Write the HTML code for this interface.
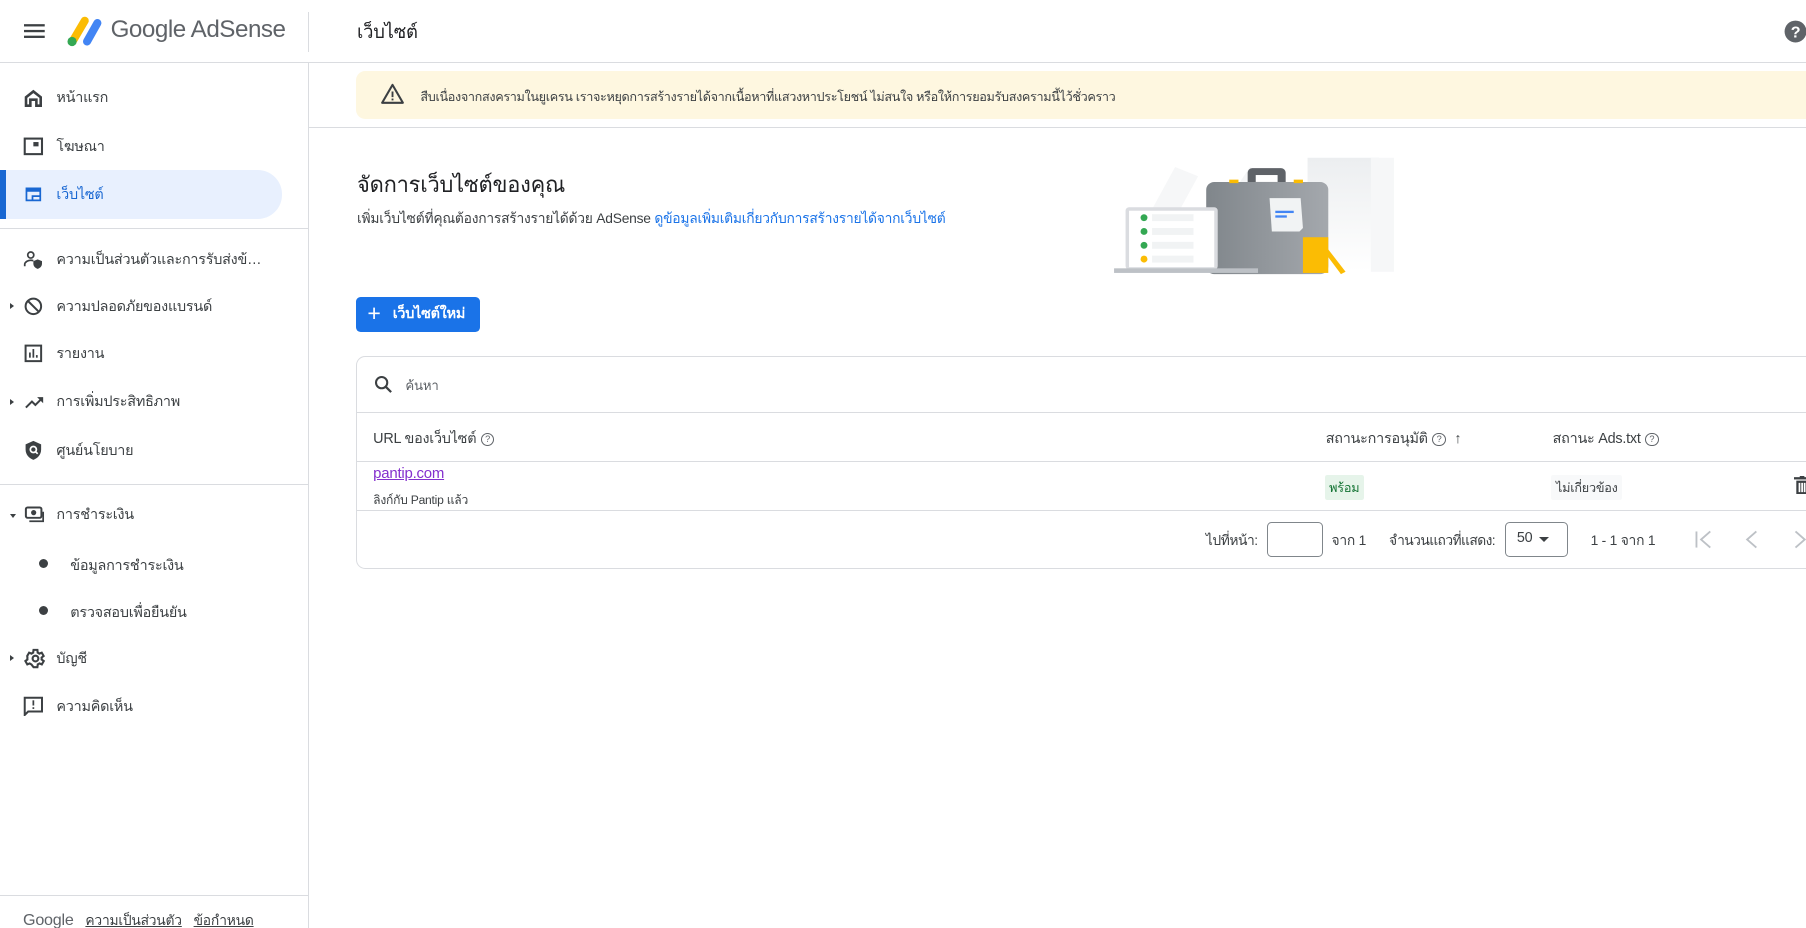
<!DOCTYPE html>
<html><head><meta charset="utf-8">
<style>
html,body{margin:0;padding:0;width:1806px;height:928px;overflow:hidden;background:#fff}
#r{zoom:1.15178;width:1568px;height:806px;position:relative;overflow:hidden;font-family:"Liberation Sans","Noto Sans CJK SC",sans-serif;color:#3c4043;letter-spacing:-0.2px}
.a{position:absolute}
.ni{position:absolute;left:0;width:245px;height:42px;display:flex;align-items:center;font-size:12.5px;color:#3c4043}
.ni svg{position:absolute;left:20px}
.ni span{position:absolute;left:49px;white-space:nowrap}
.car{position:absolute;left:9px;width:0;height:0;border-top:3px solid transparent;border-bottom:3px solid transparent;border-left:4px solid #3c4043}
.hl{position:absolute;height:1px;background:#dadce0}
.q{display:inline-block;width:10px;height:10px;border:1px solid #5f6368;border-radius:50%;font-size:8px;line-height:10px;text-align:center;color:#5f6368;vertical-align:middle;margin-left:4px;letter-spacing:0}
</style></head><body><div id="r">
<!-- header -->
<svg class="a" style="left:21px;top:20px" width="18" height="14"><rect y="1" width="18" height="2" fill="#3c4043"/><rect y="6" width="18" height="2" fill="#3c4043"/><rect y="11" width="18" height="2" fill="#3c4043"/></svg>
<svg class="a" style="left:56px;top:13px" width="34" height="28" viewBox="0 0 34 28"><line x1="8" y1="22" x2="18" y2="5" stroke="#fbbc04" stroke-width="7" stroke-linecap="round"/><line x1="20" y1="23" x2="29" y2="7" stroke="#4285f4" stroke-width="7" stroke-linecap="round"/><circle cx="7" cy="23" r="4" fill="#34a853"/></svg>
<div class="a" style="left:96px;top:14px;font-size:21px;color:#5f6368;letter-spacing:-0.4px">Google AdSense</div>
<div class="a" style="left:267px;top:10px;width:1px;height:35px;background:#dadce0"></div>
<div class="a" style="left:310px;top:16px;font-size:16px;color:#202124">เว็บไซต์</div>
<svg class="a" style="left:1549px;top:17px" width="20" height="20"><circle cx="10" cy="10" r="9.5" fill="#5f6368"/><text x="10" y="15" font-size="14" font-weight="bold" fill="#fff" text-anchor="middle" font-family="Liberation Sans">?</text></svg>
<div class="hl" style="left:0;top:54px;width:1568px"></div>
<div class="a" style="left:267px;top:54px;width:1px;height:752px;background:#dadce0"></div>

<!-- sidebar -->
<div class="ni" style="top:64px"><svg width="18" height="18" viewBox="0 0 24 24"><path d="M12 2L2 10v12h8v-7h4v7h8V10z M5 11.5l7-5.5 7 5.5V19h-2v-7H7v7H5z" fill="#3c4043" fill-rule="evenodd"/></svg><span>หน้าแรก</span></div>
<div class="ni" style="top:106px"><svg width="18" height="18" viewBox="0 0 24 24"><rect x="2" y="3" width="20" height="18" fill="none" stroke="#3c4043" stroke-width="2.4"/><rect x="12" y="7" width="6" height="5" fill="#3c4043"/></svg><span>โฆษณา</span></div>
<div class="a" style="left:0;top:148px;width:245px;height:42px;background:#e8f0fe;border-radius:0 21px 21px 0"></div>
<div class="a" style="left:0;top:148px;width:5px;height:42px;background:#1967d2"></div>
<div class="ni" style="top:148px;color:#1967d2"><svg width="18" height="18" viewBox="0 0 24 24"><path d="M3 4h18v16H3z M5 9v9h5v-5h9V9z M12 15v3h7v-3z" fill="#1967d2" fill-rule="evenodd"/></svg><span>เว็บไซต์</span></div>
<div class="hl" style="left:0;top:198px;width:267px"></div>
<div class="ni" style="top:204px"><svg width="18" height="18" viewBox="0 0 24 24"><circle cx="9" cy="7" r="3.5" fill="none" stroke="#3c4043" stroke-width="2"/><path d="M2 20v-2c0-3 4-5 7-5 1 0 2 .2 3 .5" fill="none" stroke="#3c4043" stroke-width="2"/><path d="M17 12l5 2v3c0 3-2 5-5 6-3-1-5-3-5-6v-3z" fill="#3c4043"/></svg><span style="width:182px;overflow:hidden;text-overflow:ellipsis">ความเป็นส่วนตัวและการรับส่งข้อความ</span></div>
<div class="car" style="top:263px"></div>
<div class="ni" style="top:245px"><svg width="18" height="18" viewBox="0 0 24 24"><circle cx="12" cy="12" r="9" fill="none" stroke="#3c4043" stroke-width="2.3"/><line x1="5.5" y1="5.5" x2="18.5" y2="18.5" stroke="#3c4043" stroke-width="2.3"/></svg><span>ความปลอดภัยของแบรนด์</span></div>
<div class="ni" style="top:286px"><svg width="18" height="18" viewBox="0 0 24 24"><rect x="3" y="3" width="18" height="18" fill="none" stroke="#3c4043" stroke-width="2.3"/><rect x="7" y="11" width="2" height="6" fill="#3c4043"/><rect x="11" y="7" width="2" height="10" fill="#3c4043"/><rect x="15" y="14" width="2" height="3" fill="#3c4043"/></svg><span>รายงาน</span></div>
<div class="car" style="top:346px"></div>
<div class="ni" style="top:328px"><svg width="20" height="18" viewBox="0 0 24 24"><path d="M2 18l7-7 4 4 8-8" fill="none" stroke="#3c4043" stroke-width="2.3"/><path d="M15 6h7v7z" fill="#3c4043"/></svg><span>การเพิ่มประสิทธิภาพ</span></div>
<div class="ni" style="top:370px"><svg width="18" height="18" viewBox="0 0 24 24"><path d="M12 1l9 4v6c0 6-4 10-9 12-5-2-9-6-9-12V5z" fill="#3c4043"/><circle cx="12" cy="11" r="3.5" fill="none" stroke="#fff" stroke-width="2"/><line x1="14.5" y1="13.5" x2="17" y2="16" stroke="#fff" stroke-width="2"/></svg><span>ศูนย์นโยบาย</span></div>
<div class="hl" style="left:0;top:420px;width:267px"></div>
<div class="a" style="left:9px;top:446px;width:0;height:0;border-left:3px solid transparent;border-right:3px solid transparent;border-top:4px solid #3c4043"></div>
<div class="ni" style="top:426px"><svg width="20" height="18" viewBox="0 0 24 24"><rect x="2" y="4" width="18" height="12" rx="2" fill="none" stroke="#3c4043" stroke-width="2.3"/><circle cx="11" cy="10" r="3" fill="#3c4043"/><path d="M6 20h16V9" fill="none" stroke="#3c4043" stroke-width="2"/></svg><span>การชำระเงิน</span></div>
<div class="a" style="left:34px;top:485px;width:8px;height:8px;border-radius:50%;background:#3c4043"></div>
<div class="a" style="left:61px;top:481px;font-size:12.5px">ข้อมูลการชำระเงิน</div>
<div class="a" style="left:34px;top:526px;width:8px;height:8px;border-radius:50%;background:#3c4043"></div>
<div class="a" style="left:61px;top:522px;font-size:12.5px">ตรวจสอบเพื่อยืนยัน</div>
<div class="car" style="top:569px"></div>
<div class="ni" style="top:551px"><svg width="20" height="20" viewBox="0 0 24 24"><path d="M19.4 13a7.5 7.5 0 000-2l2.1-1.6-2-3.5-2.5 1a7 7 0 00-1.7-1L15 3h-4l-.4 2.9a7 7 0 00-1.7 1l-2.5-1-2 3.5L4.6 11a7.5 7.5 0 000 2l-2.1 1.6 2 3.5 2.5-1a7 7 0 001.7 1L11 21h4l.4-2.9a7 7 0 001.7-1l2.5 1 2-3.5z" fill="none" stroke="#3c4043" stroke-width="2.2"/><circle cx="13" cy="12" r="3" fill="none" stroke="#3c4043" stroke-width="2.2"/></svg><span>บัญชี</span></div>
<div class="ni" style="top:592px"><svg width="18" height="18" viewBox="0 0 24 24"><path d="M2 2h20v16H6l-4 4z" fill="none" stroke="#3c4043" stroke-width="2.3"/><rect x="11" y="5" width="2" height="6" fill="#3c4043"/><rect x="11" y="13" width="2" height="2" fill="#3c4043"/></svg><span>ความคิดเห็น</span></div>
<div class="hl" style="left:0;top:777px;width:267px"></div>
<div class="a" style="left:20px;top:790px;font-size:13px;color:#5f6368;white-space:nowrap"><span style="font-size:14px">Google</span>&nbsp;&nbsp; <u style="color:#3c4043;font-size:12px">ความเป็นส่วนตัว</u>&nbsp;&nbsp; <u style="color:#3c4043;font-size:12px">ข้อกำหนด</u></div>

<!-- banner -->
<div class="a" style="left:309px;top:62px;width:1280px;height:41px;background:#fef7e0;border-radius:8px"></div>
<svg class="a" style="left:331px;top:72px" width="20" height="18" viewBox="0 0 24 22"><path d="M12 2L1 21h22z" fill="none" stroke="#3c4043" stroke-width="2.2" stroke-linejoin="round"/><rect x="11" y="9" width="2" height="6" fill="#3c4043"/><rect x="11" y="16.5" width="2" height="2" fill="#3c4043"/></svg>
<div class="a" style="left:365px;top:75px;font-size:11px;color:#3c4043;white-space:nowrap;letter-spacing:-0.3px">สืบเนื่องจากสงครามในยูเครน เราจะหยุดการสร้างรายได้จากเนื้อหาที่แสวงหาประโยชน์ ไม่สนใจ หรือให้การยอมรับสงครามนี้ไว้ชั่วคราว</div>
<div class="hl" style="left:267px;top:110px;width:1301px"></div>

<div class="a" style="left:310px;top:145px;font-size:19px;color:#202124">จัดการเว็บไซต์ของคุณ</div>
<div class="a" style="left:310px;top:181px;font-size:12px;color:#3c4043;white-space:nowrap">เพิ่มเว็บไซต์ที่คุณต้องการสร้างรายได้ด้วย AdSense <span style="color:#1a73e8">ดูข้อมูลเพิ่มเติมเกี่ยวกับการสร้างรายได้จากเว็บไซต์</span></div>

<!-- illustration -->
<svg class="a" style="left:960px;top:132px" width="256" height="108" viewBox="960 132 256 108">
<defs><linearGradient id="g" x1="0" y1="0" x2="1" y2="0"><stop offset="0" stop-color="#80868b"/><stop offset="1" stop-color="#a4a8ad"/></linearGradient>
<linearGradient id="f" x1="0" y1="0" x2="0" y2="1"><stop offset="0" stop-color="#eceef0"/><stop offset="1" stop-color="#fff"/></linearGradient></defs>
<path d="M990 200l30-55 20 8-30 55z" fill="#f6f7f8"/><path d="M1065 175l20-30 12 8-15 25z" fill="#f4f5f6"/>
<rect x="1135" y="137" width="62" height="99" fill="url(#f)"/><rect x="1190" y="137" width="20" height="99" fill="#f6f7f8"/>
<rect x="1083" y="146" width="33" height="16" rx="4" fill="#5f6368"/><rect x="1090" y="152" width="19" height="6" fill="#fff"/>
<rect x="1047" y="158" width="106" height="80" rx="7" fill="url(#g)"/>
<rect x="1067" y="156" width="8" height="3" fill="#fbbc04"/><rect x="1123" y="156" width="8" height="3" fill="#fbbc04"/>
<path d="M1102 172h27l2 26-3 3h-24z" fill="#f1f3f4"/><rect x="1107" y="183" width="16" height="2" fill="#4285f4"/><rect x="1107" y="187" width="10" height="2" fill="#4285f4"/>
<rect x="977" y="180" width="80" height="54" rx="3" fill="#dadce0"/><rect x="980" y="183" width="74" height="49" fill="#fff"/>
<circle cx="993" cy="189" r="3" fill="#34a853"/><rect x="1000" y="186" width="36" height="6" fill="#f1f3f4"/>
<circle cx="993" cy="201" r="3" fill="#34a853"/><rect x="1000" y="198" width="36" height="6" fill="#f1f3f4"/>
<circle cx="993" cy="213" r="3" fill="#34a853"/><rect x="1000" y="210" width="36" height="6" fill="#f1f3f4"/>
<circle cx="993" cy="225" r="3" fill="#fbbc04"/><rect x="1000" y="222" width="36" height="6" fill="#f1f3f4"/>
<rect x="967" y="233" width="125" height="4" fill="#bdc1c6"/>
<rect x="1131" y="206" width="22" height="31" fill="#fbbc04"/><path d="M1151 214l17 22-4 2-15-20z" fill="#fbbc04"/>
</svg>

<!-- button -->
<div class="a" style="left:309px;top:258px;width:108px;height:30px;background:#1a73e8;border-radius:4px;color:#fff;font-size:12.5px;font-weight:bold;line-height:30px"><span style="position:absolute;left:10px;top:-1px;font-size:20px;font-weight:normal">+</span><span style="position:absolute;left:32px">เว็บไซต์ใหม่</span></div>

<!-- card -->
<div class="a" style="left:309px;top:309px;width:1300px;height:183px;border:1px solid #dadce0;border-radius:8px"></div>
<svg class="a" style="left:324px;top:325px" width="18" height="18" viewBox="0 0 24 24"><circle cx="10" cy="10" r="6.5" fill="none" stroke="#3c4043" stroke-width="2.4"/><line x1="15" y1="15" x2="21" y2="21" stroke="#3c4043" stroke-width="2.6"/></svg>
<div class="a" style="left:352px;top:326px;font-size:11.5px;color:#5f6368">ค้นหา</div>
<div class="hl" style="left:310px;top:358px;width:1260px"></div>
<div class="a" style="left:324px;top:371px;font-size:12.5px;color:#3c4043">URL ของเว็บไซต์<span class="q">?</span></div>
<div class="a" style="left:1151px;top:371px;font-size:12.5px;color:#3c4043;white-space:nowrap">สถานะการอนุมัติ<span class="q">?</span> <span style="margin-left:4px">↑</span></div>
<div class="a" style="left:1348px;top:371px;font-size:12.5px;color:#3c4043;white-space:nowrap">สถานะ Ads.txt<span class="q">?</span></div>
<div class="hl" style="left:310px;top:400px;width:1260px"></div>
<div class="a" style="left:324px;top:404px;font-size:13px;color:#8430ce;text-decoration:underline">pantip.com</div>
<div class="a" style="left:324px;top:426px;font-size:10.5px;color:#3c4043">ลิงก์กับ Pantip แล้ว</div>
<div class="a" style="left:1150px;top:412px;background:#e6f4ea;color:#137333;font-size:11px;padding:2px 4px;border-radius:2px">พร้อม</div>
<div class="a" style="left:1347px;top:412px;background:#f8f9fa;color:#3c4043;font-size:11px;padding:2px 4px;border-radius:2px">ไม่เกี่ยวข้อง</div>
<svg class="a" style="left:1558px;top:413px" width="14" height="16" viewBox="0 0 14 16"><rect x="0" y="1" width="14" height="2" fill="#3c4043"/><rect x="5" y="0" width="4" height="2" fill="#3c4043"/><path d="M2 4h10v12H2z M4 6v8h1.5V6z M6.3 6v8h1.5V6z M8.5 6v8H10V6z" fill="#3c4043" fill-rule="evenodd"/></svg>
<div class="hl" style="left:310px;top:443px;width:1260px"></div>
<div class="a" style="left:1047px;top:460px;font-size:12px;white-space:nowrap;letter-spacing:-0.4px">ไปที่หน้า:</div>
<div class="a" style="left:1100px;top:453px;width:47px;height:29px;border:1px solid #80868b;border-radius:4px"></div>
<div class="a" style="left:1156px;top:460px;font-size:12px;white-space:nowrap">จาก 1</div>
<div class="a" style="left:1206px;top:460px;font-size:12px;white-space:nowrap;letter-spacing:-0.5px">จำนวนแถวที่แสดง:</div>
<div class="a" style="left:1307px;top:453px;width:53px;height:29px;border:1px solid #80868b;border-radius:4px"></div>
<div class="a" style="left:1317px;top:460px;font-size:12.5px">50</div>
<div class="a" style="left:1336px;top:466px;width:0;height:0;border-left:4.5px solid transparent;border-right:4.5px solid transparent;border-top:5px solid #3c4043"></div>
<div class="a" style="left:1381px;top:460px;font-size:12px;white-space:nowrap">1 - 1 จาก 1</div>
<svg class="a" style="left:1470px;top:458px" width="100" height="20" viewBox="0 0 100 20"><line x1="3" y1="3" x2="3" y2="17" stroke="#bdc1c6" stroke-width="1.6"/><path d="M15 3l-8 7 8 7" fill="none" stroke="#bdc1c6" stroke-width="1.6"/><path d="M55 3l-8 7 8 7" fill="none" stroke="#bdc1c6" stroke-width="1.6"/><path d="M89 3l8 7-8 7" fill="none" stroke="#bdc1c6" stroke-width="1.6"/></svg>
</div></body></html>
